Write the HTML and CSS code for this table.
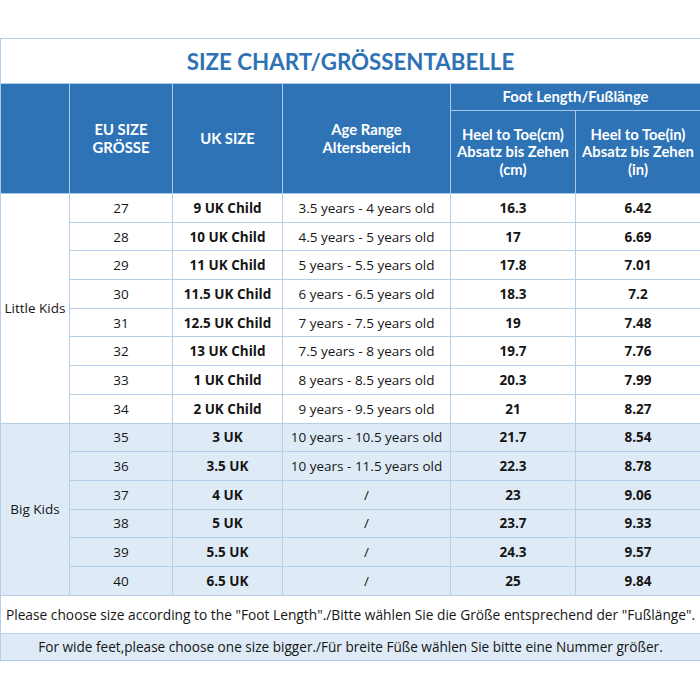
FILE: index.html
```html
<!DOCTYPE html>
<html>
<head>
<meta charset="utf-8">
<link rel="stylesheet" href="styles.css">
</head>
<body>
<div class="page">
<table class="chart">
  <colgroup>
    <col class="c-group"><col class="c-eu"><col class="c-uk"><col class="c-age"><col class="c-cm"><col class="c-in">
  </colgroup>
  <tr class="title-row"><td colspan="6" class="title">SIZE CHART/GRÖSSENTABELLE</td></tr>
  <tr class="head1">
    <th rowspan="2"></th>
    <th rowspan="2">EU SIZE<br>GRÖSSE</th>
    <th rowspan="2">UK SIZE</th>
    <th rowspan="2">Age Range<br>Altersbereich</th>
    <th colspan="2">Foot Length/Fußlänge</th>
  </tr>
  <tr class="head2">
    <th>Heel to Toe(cm)<br>Absatz bis Zehen<br>(cm)</th>
    <th>Heel to Toe(in)<br>Absatz bis Zehen<br>(in)</th>
  </tr>
  <tr class="row"><td rowspan="8" class="group">Little Kids</td><td>27</td><td class="b">9 UK Child</td><td>3.5 years - 4 years old</td><td class="b">16.3</td><td class="b">6.42</td></tr>
  <tr class="row"><td>28</td><td class="b">10 UK Child</td><td>4.5 years - 5 years old</td><td class="b">17</td><td class="b">6.69</td></tr>
  <tr class="row"><td>29</td><td class="b">11 UK Child</td><td>5 years - 5.5 years old</td><td class="b">17.8</td><td class="b">7.01</td></tr>
  <tr class="row"><td>30</td><td class="b">11.5 UK Child</td><td>6 years - 6.5 years old</td><td class="b">18.3</td><td class="b">7.2</td></tr>
  <tr class="row"><td>31</td><td class="b">12.5 UK Child</td><td>7 years - 7.5 years old</td><td class="b">19</td><td class="b">7.48</td></tr>
  <tr class="row"><td>32</td><td class="b">13 UK Child</td><td>7.5 years - 8 years old</td><td class="b">19.7</td><td class="b">7.76</td></tr>
  <tr class="row"><td>33</td><td class="b">1 UK Child</td><td>8 years - 8.5 years old</td><td class="b">20.3</td><td class="b">7.99</td></tr>
  <tr class="row"><td>34</td><td class="b">2 UK Child</td><td>9 years - 9.5 years old</td><td class="b">21</td><td class="b">8.27</td></tr>
  <tr class="row big"><td rowspan="6" class="group">Big Kids</td><td>35</td><td class="b">3 UK</td><td>10 years - 10.5 years old</td><td class="b">21.7</td><td class="b">8.54</td></tr>
  <tr class="row big"><td>36</td><td class="b">3.5 UK</td><td>10 years - 11.5 years old</td><td class="b">22.3</td><td class="b">8.78</td></tr>
  <tr class="row big"><td>37</td><td class="b">4 UK</td><td>/</td><td class="b">23</td><td class="b">9.06</td></tr>
  <tr class="row big"><td>38</td><td class="b">5 UK</td><td>/</td><td class="b">23.7</td><td class="b">9.33</td></tr>
  <tr class="row big"><td>39</td><td class="b">5.5 UK</td><td>/</td><td class="b">24.3</td><td class="b">9.57</td></tr>
  <tr class="row big"><td>40</td><td class="b">6.5 UK</td><td>/</td><td class="b">25</td><td class="b">9.84</td></tr>
  <tr class="note1"><td colspan="6">Please choose size according to the "Foot Length"./Bitte wählen Sie die Größe entsprechend der "Fußlänge".</td></tr>
  <tr class="note2"><td colspan="6">For wide feet,please choose one size bigger./Für breite Füße wählen Sie bitte eine Nummer größer.</td></tr>
</table>
</div>
</body>
</html>
```

FILE: styles.css
```css
html, body {
  margin: 0;
  padding: 0;
  background: #ffffff;
}
.page {
  padding-top: 38px;
  width: 700px;
}
.chart {
  width: 700px;
  border-collapse: collapse;
  table-layout: fixed;
  font-family: "Open Sans", "Noto Sans", sans-serif;
  color: #151515;
  font-size: 13.5px;
}
.c-group { width: 69px; }
.c-eu { width: 103px; }
.c-uk { width: 110px; }
.c-age { width: 168px; }
.c-cm { width: 125px; }
.c-in { width: 125px; }
.chart td, .chart th {
  border: 1px solid #b4cfe9;
  padding: 0;
  text-align: center;
  vertical-align: middle;
  white-space: nowrap;
}
.title-row td.title {
  height: 44px;
  font-family: "Lato", "Open Sans", sans-serif;
  font-weight: 700;
  font-size: 22.3px;
  color: #2e72b5;
}
.head1 th, .head2 th {
  background: #2e73b6;
  color: #ffffff;
  font-family: "Lato", "Open Sans", sans-serif;
  font-weight: 700;
  font-size: 14.8px;
  line-height: 17.5px;
  border-color: #a8c9ea;
}
.head1 { height: 27px; }
.head2 { height: 83px; }
.row { height: 28.7px; }
.row td { font-size: 13.5px; }
.row td.b { font-weight: 700; }
.big td { background: #deebf7; }
.group { font-size: 13.5px; }
.note1 td {
  height: 37px;
  font-size: 13.75px;
}
.note2 td {
  height: 26px;
  font-size: 13.6px;
  background: #deebf7;
}
```
